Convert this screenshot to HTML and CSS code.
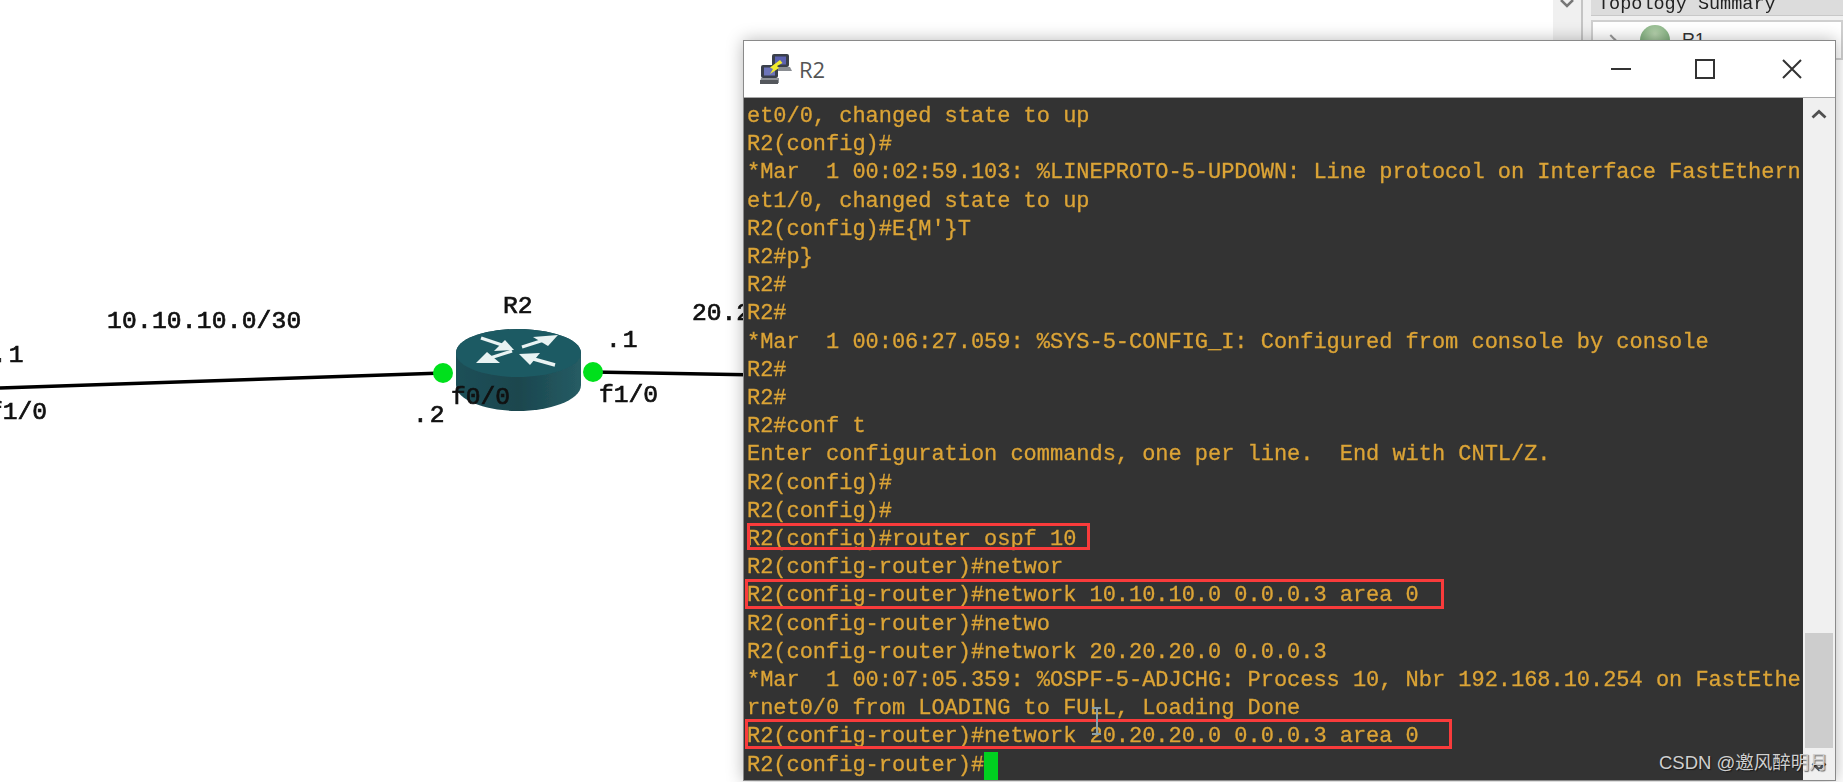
FILE: index.html
```html
<!DOCTYPE html>
<html lang="en">
<head>
<meta charset="utf-8">
<title>R2</title>
<link rel="stylesheet" href="styles.css">
</head>
<body>
<div class="desktop">
  <svg class="topology" width="760" height="500" viewBox="0 0 760 500" aria-hidden="true">
    <defs>
      <linearGradient id="side" x1="0" y1="0" x2="1" y2="0">
        <stop offset="0" stop-color="#1d5058"/>
        <stop offset="0.5" stop-color="#1a464e"/>
        <stop offset="1" stop-color="#265c64"/>
      </linearGradient>
      <filter id="soft"><feGaussianBlur stdDeviation="0.7"/></filter>
    </defs>
    <g filter="url(#soft)">
      <path d="M0 388 L443 373" stroke="#000" stroke-width="3.4" fill="none"/>
      <path d="M593 372 L760 375" stroke="#000" stroke-width="3.4" fill="none"/>
      <path d="M456 353 C456 338 488 329 518 329 C548 329 581 338 581 353 L581 385 C581 401 548 411 518 411 C488 411 456 401 456 385 Z" fill="url(#side)"/>
      <path d="M456 353 C456 338 488 329 518 329 C548 329 581 338 581 353 C581 368 548 377 518 377 C488 377 456 368 456 353 Z" fill="#1f5a63"/>
      <g fill="#e9f3f3" stroke="#e9f3f3" stroke-width="3.400">
        <path d="M481 338 L505 346" fill="none"/>
        <path d="M522 347 L547 339" fill="none"/>
        <path d="M490 358 L512 351" fill="none"/>
        <path d="M530 358 L555 365" fill="none"/>
      </g>
      <g fill="#e9f3f3">
        <path d="M514 350 L505 340 L494 351 Z"/>
        <path d="M558 335 L533 337 L548 346 Z"/>
        <path d="M476 363 L500 363 L487 352 Z"/>
        <path d="M519 354 L540 353 L530 365 Z"/>
      </g>
      <circle cx="443" cy="373" r="10" fill="#00e01c"/>
      <circle cx="593" cy="372" r="10" fill="#00e01c"/>
    </g>
  </svg>

  <span class="label label-net1">10.10.10.0/30</span>
  <span class="label label-r2">R2</span>
  <span class="label label-r1-ip">.1</span>
  <span class="label label-r1-if">f1/0</span>
  <span class="label label-ip2">.2</span>
  <span class="label label-f00">f0/0</span>
  <span class="label label-ip1">.1</span>
  <span class="label label-f10">f1/0</span>
  <span class="label label-net2">20.2</span>

  <aside class="side">
    <div class="side-strip">
      <svg class="side-pin" width="14" height="8" viewBox="0 0 14 8" aria-hidden="true"><path d="M1 0 L7 6 L13 0" fill="none" stroke="#777" stroke-width="2.500"/></svg>
    </div>
    <div class="side-panel">
      <div class="side-head">Topology Summary</div>
      <div class="side-tree">
        <span class="side-arrow"></span>
        <span class="side-node"></span>
        <span class="side-name">R1</span>
      </div>
    </div>
  </aside>

  <section class="window">
    <header class="titlebar">
      <svg class="app-icon" width="34" height="32" viewBox="0 0 34 32" aria-hidden="true">
        <rect x="13" y="1" width="17" height="13" rx="2" fill="#3a3f4a"/>
        <rect x="16" y="3.5" width="11" height="8" fill="#5c62b0"/>
        <path d="M15 14 H31 L33 18 H17 Z" fill="#8a8d92"/>
        <rect x="2" y="12" width="17" height="13" rx="2" fill="#3a3f4a"/>
        <rect x="5" y="14.5" width="11" height="8" fill="#6d74b8"/>
        <path d="M2 25 H20 L20 30 H1 Z" fill="#8f9297"/>
        <path d="M1 27 H19 V31 H1 Z" fill="#54575c"/>
        <path d="M21 7 L23.500 10 L18 13 L20 15 L11 21 L14 16 L11 14.500 Z" fill="#f2ea2c"/>
      </svg>
      <span class="title">R2</span>
      <div class="controls">
        <svg class="ctl ctl-min" width="20" height="20" viewBox="0 0 20 20" aria-hidden="true"><path d="M0 10 H20" stroke="#333" stroke-width="2"/></svg>
        <svg class="ctl ctl-max" width="20" height="20" viewBox="0 0 20 20" aria-hidden="true"><rect x="1" y="1" width="18" height="18" fill="none" stroke="#333" stroke-width="2"/></svg>
        <svg class="ctl ctl-close" width="20" height="20" viewBox="0 0 20 20" aria-hidden="true"><path d="M1 1 L19 19 M19 1 L1 19" stroke="#333" stroke-width="2"/></svg>
      </div>
    </header>
    <div class="client">
      <div class="terminal">
        <pre class="lines">et0/0, changed state to up
R2(config)#
*Mar  1 00:02:59.103: %LINEPROTO-5-UPDOWN: Line protocol on Interface FastEthern
et1/0, changed state to up
R2(config)#E{M'}T
R2#p}
R2#
R2#
*Mar  1 00:06:27.059: %SYS-5-CONFIG_I: Configured from console by console
R2#
R2#
R2#conf t
Enter configuration commands, one per line.  End with CNTL/Z.
R2(config)#
R2(config)#
R2(config)#router ospf 10
R2(config-router)#networ
R2(config-router)#network 10.10.10.0 0.0.0.3 area 0
R2(config-router)#netwo
R2(config-router)#network 20.20.20.0 0.0.0.3
*Mar  1 00:07:05.359: %OSPF-5-ADJCHG: Process 10, Nbr 192.168.10.254 on FastEthe
rnet0/0 from LOADING to FULL, Loading Done
R2(config-router)#network 20.20.20.0 0.0.0.3 area 0
R2(config-router)#<span class="cursor"> </span></pre>
        <div class="mark mark-1"></div>
        <div class="mark mark-2"></div>
        <div class="mark mark-3"></div>
        <div class="ibeam"></div>
      </div>
      <div class="scrollbar">
        <svg class="arrow" width="16" height="10" viewBox="0 0 16 10" aria-hidden="true"><path d="M1.500 8.500 L8 2.500 L14.500 8.500" fill="none" stroke="#505050" stroke-width="2.800"/></svg>
        <div class="track"><div class="thumb"></div></div>
        <svg class="arrow" width="16" height="10" viewBox="0 0 16 10" aria-hidden="true"><path d="M1.500 1.500 L8 7.500 L14.500 1.500" fill="none" stroke="#505050" stroke-width="2.800"/></svg>
      </div>
    </div>
  </section>

  <div class="watermark">CSDN @邀风醉明月</div>
</div>
</body>
</html>
```
FILE: styles.css
```css
* { box-sizing: border-box; }
html, body { margin: 0; padding: 0; background: #fff; }
.desktop {
  position: relative;
  width: 1843px;
  height: 782px;
  overflow: hidden;
  background: #fff;
}
.topology { position: absolute; left: 0; top: 0; }

.label {
  position: absolute;
  font-family: "Liberation Mono", monospace;
  font-weight: 400;
  font-size: 24.6px;
  line-height: 28px;
  color: #111;
  white-space: pre;
  -webkit-text-stroke: 0.7px #111;
  filter: blur(0.4px);
}
.label-net1 { left: 107px; top: 308px; letter-spacing: 0.2px; }
.label-r2 { left: 503px; top: 293px; }
.label-r1-ip { left: -8px; top: 342px; letter-spacing: 2px; }
.label-r1-if { left: -12px; top: 399px; }
.label-ip2 { left: 413px; top: 402px; letter-spacing: 2px; }
.label-f00 { left: 451px; top: 384px; }
.label-ip1 { left: 606px; top: 327px; letter-spacing: 2px; }
.label-f10 { left: 599px; top: 382px; }
.label-net2 { left: 692px; top: 300px; }

.side {
  position: absolute;
  left: 1553px;
  top: 0;
  width: 290px;
  height: 60px;
  display: flex;
  background: #f0f0f0;
}
.side-strip {
  width: 30px;
  border-right: 2px solid #c4c4c4;
  display: flex;
  justify-content: center;
  align-items: flex-start;
}
.side-pin { display: block; }
.side-panel {
  flex: 1;
  padding-left: 8px;
  display: flex;
  flex-direction: column;
  background: #f0f0f0;
}
.side-head {
  height: 16px;
  padding-left: 7px;
  background: #dcdcdc;
  border-bottom: 1px solid #c8c8c8;
  font: 18.5px/9px "Liberation Mono", monospace;
  color: #222;
  filter: blur(0.4px);
  overflow: hidden;
}
.side-tree {
  flex: 1;
  margin-top: 4px;
  background: #fff;
  border: 2px solid #cfcfcf;
  display: flex;
  align-items: center;
  padding-left: 14px;
}
.side-arrow {
  width: 8px;
  height: 8px;
  border-top: 2px solid #999;
  border-right: 2px solid #999;
  transform: rotate(45deg);
}
.side-node {
  width: 30px;
  height: 30px;
  margin-left: 25px;
  border-radius: 50%;
  background: radial-gradient(circle at 50% 30%, #b7d2ae, #5d9a60);
}
.side-name {
  margin-left: 12px;
  font: 18px/20px "Liberation Sans", sans-serif;
  color: #333;
}

.window {
  position: absolute;
  left: 743px;
  top: 40px;
  width: 1093px;
  height: 741px;
  display: flex;
  flex-direction: column;
  background: #f0f0f0;
  border: 1px solid #8a8a8a;
  box-shadow: 0 0 16px rgba(0, 0, 0, 0.28);
}
.titlebar {
  height: 57px;
  flex: none;
  display: flex;
  align-items: center;
  padding-left: 15px;
  background: #fff;
  border-bottom: 1px solid #a8a8a8;
}
.app-icon { filter: blur(0.4px); }
.title {
  margin-left: 6px;
  font: 22px/26px "Open Sans", sans-serif;
  color: #555;
}
.controls {
  margin-left: auto;
  margin-right: 33px;
  display: flex;
  gap: 64px;
}
.ctl { display: block; }
.ctl-close { margin-left: 3px; }
.client { flex: 1; display: flex; min-height: 0; }
.terminal {
  position: relative;
  width: 1059px;
  background: #333;
  overflow: hidden;
}
.lines {
  margin: 0;
  padding: 5px 0 0 3px;
  font-family: "Liberation Mono", monospace;
  font-size: 22px;
  letter-spacing: -0.03px;
  line-height: 28.2px;
  color: #dca436;
  white-space: pre;
  -webkit-text-stroke: 0.3px #dca436;
  filter: blur(0.45px);
}
.cursor {
  display: inline-block;
  width: 14px;
  height: 28px;
  vertical-align: top;
  background: #00d020;
}
.mark {
  position: absolute;
  border: 3px solid #f93b3b;
}
.mark-1 { left: 3px; top: 425px; width: 343px; height: 27px; }
.mark-2 { left: 1px; top: 481px; width: 699px; height: 30px; }
.mark-3 { left: 1px; top: 621px; width: 707px; height: 30px; }
.ibeam {
  position: absolute;
  left: 348px;
  top: 609px;
  width: 9px;
  height: 28px;
  border-top: 2px solid #8aa0a8;
  border-bottom: 2px solid #8aa0a8;
  background: linear-gradient(#8aa0a8, #8aa0a8) center / 2px 100% no-repeat;
}
.scrollbar {
  flex: 1;
  display: flex;
  flex-direction: column;
  align-items: center;
  padding: 11px 2px 8px;
  background: #f0f0f0;
}
.arrow { flex: none; }
.track {
  flex: 1;
  width: 100%;
  display: flex;
  flex-direction: column;
  justify-content: flex-end;
  padding-bottom: 14px;
}
.thumb { height: 115px; background: #cdcdcd; }

.watermark {
  position: absolute;
  left: 1659px;
  top: 751px;
  font-family: "Liberation Sans", "Noto Sans CJK SC", sans-serif;
  font-size: 18.5px;
  line-height: 24px;
  color: #cfcfcf;
  white-space: pre;
  text-shadow: 1px 1px 1px rgba(0, 0, 0, 0.55);
}
```
